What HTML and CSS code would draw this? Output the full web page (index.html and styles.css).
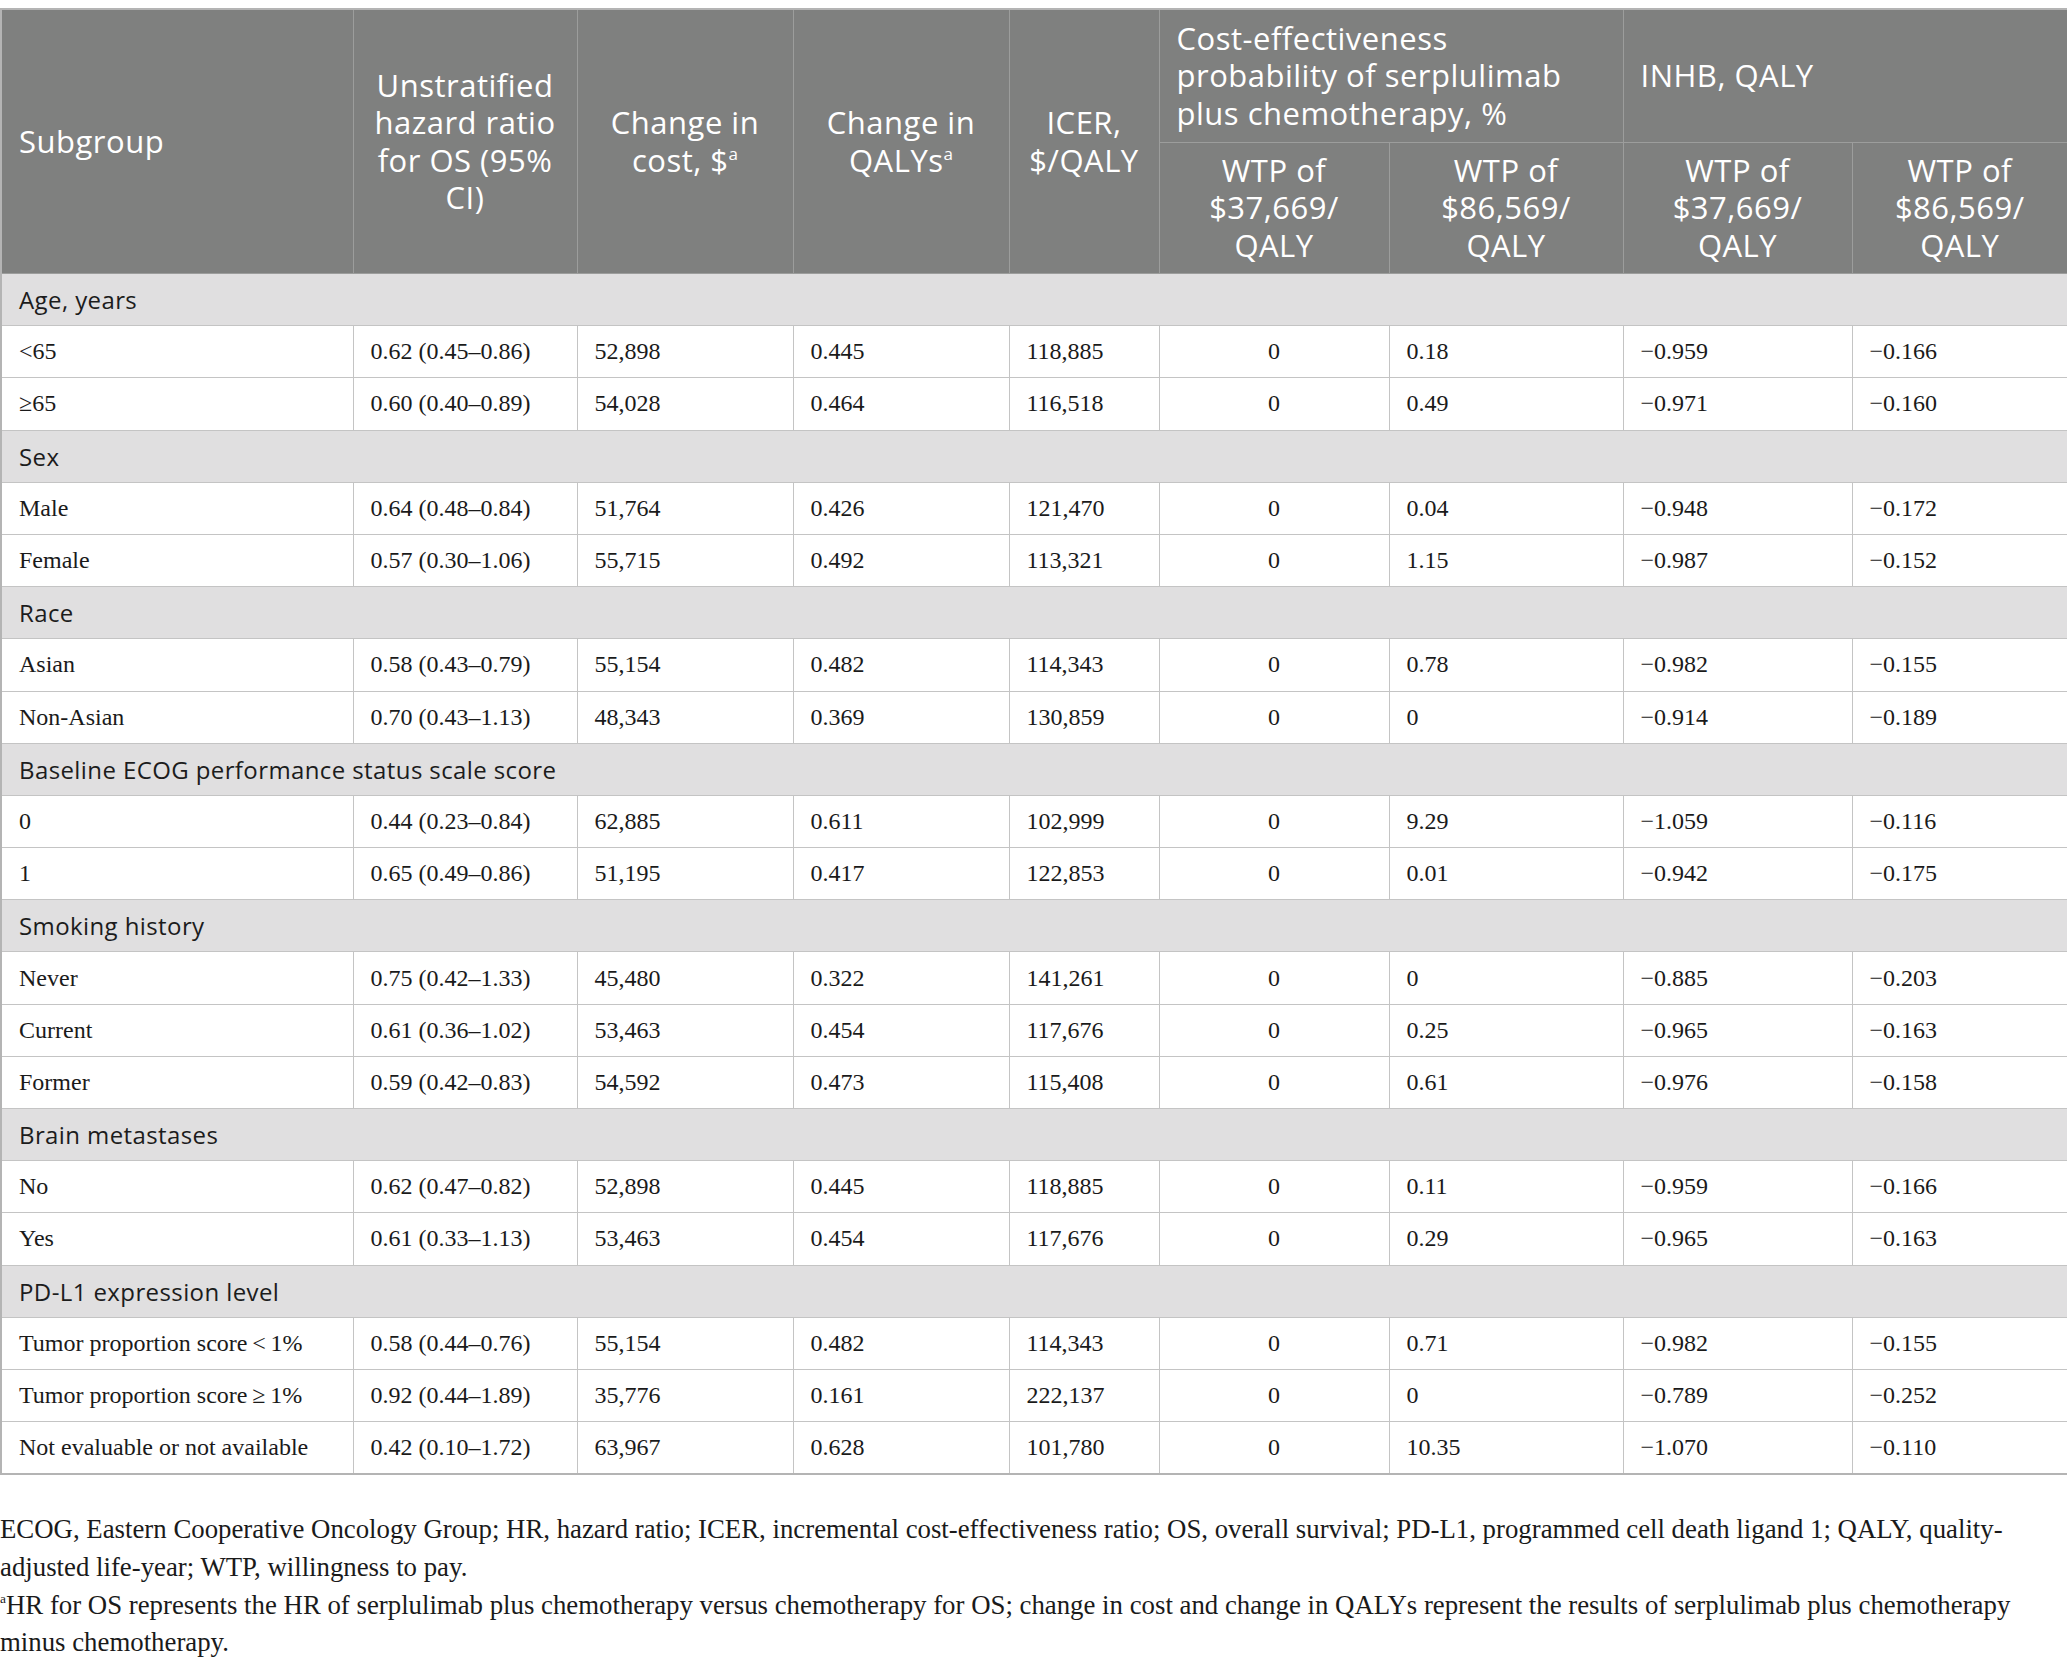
FILE: index.html
```html
<!DOCTYPE html>
<html lang="en">
<head>
<meta charset="utf-8">
<title>Subgroup analysis</title>
<link rel="stylesheet" href="styles.css">
</head>
<body>
<div class="page">
<table class="data">
  <colgroup>
    <col class="c1"><col class="c2"><col class="c3"><col class="c4"><col class="c5"><col class="c6"><col class="c7"><col class="c8"><col class="c9">
  </colgroup>
  <thead>
    <tr class="h1">
      <th rowspan="2" class="left">Subgroup</th>
      <th rowspan="2">Unstratified hazard ratio for OS (95% CI)</th>
      <th rowspan="2">Change in cost, $<sup>a</sup></th>
      <th rowspan="2">Change in QALYs<sup>a</sup></th>
      <th rowspan="2" class="narrow">ICER, $/QALY</th>
      <th colspan="2" class="left">Cost-effectiveness probability of serplulimab plus chemotherapy, %</th>
      <th colspan="2" class="left">INHB, QALY</th>
    </tr>
    <tr class="h2">
      <th>WTP of $37,669/<wbr>QALY</th>
      <th>WTP of $86,569/<wbr>QALY</th>
      <th>WTP of $37,669/<wbr>QALY</th>
      <th>WTP of $86,569/<wbr>QALY</th>
    </tr>
  </thead>
  <tbody>
    <tr class="cat"><td colspan="9">Age, years</td></tr>
    <tr><td>&lt;65</td><td>0.62 (0.45–0.86)</td><td>52,898</td><td>0.445</td><td>118,885</td><td class="ctr">0</td><td>0.18</td><td>−0.959</td><td>−0.166</td></tr>
    <tr><td>≥65</td><td>0.60 (0.40–0.89)</td><td>54,028</td><td>0.464</td><td>116,518</td><td class="ctr">0</td><td>0.49</td><td>−0.971</td><td>−0.160</td></tr>
    <tr class="cat"><td colspan="9">Sex</td></tr>
    <tr><td>Male</td><td>0.64 (0.48–0.84)</td><td>51,764</td><td>0.426</td><td>121,470</td><td class="ctr">0</td><td>0.04</td><td>−0.948</td><td>−0.172</td></tr>
    <tr><td>Female</td><td>0.57 (0.30–1.06)</td><td>55,715</td><td>0.492</td><td>113,321</td><td class="ctr">0</td><td>1.15</td><td>−0.987</td><td>−0.152</td></tr>
    <tr class="cat"><td colspan="9">Race</td></tr>
    <tr><td>Asian</td><td>0.58 (0.43–0.79)</td><td>55,154</td><td>0.482</td><td>114,343</td><td class="ctr">0</td><td>0.78</td><td>−0.982</td><td>−0.155</td></tr>
    <tr><td>Non-Asian</td><td>0.70 (0.43–1.13)</td><td>48,343</td><td>0.369</td><td>130,859</td><td class="ctr">0</td><td>0</td><td>−0.914</td><td>−0.189</td></tr>
    <tr class="cat"><td colspan="9">Baseline ECOG performance status scale score</td></tr>
    <tr><td>0</td><td>0.44 (0.23–0.84)</td><td>62,885</td><td>0.611</td><td>102,999</td><td class="ctr">0</td><td>9.29</td><td>−1.059</td><td>−0.116</td></tr>
    <tr><td>1</td><td>0.65 (0.49–0.86)</td><td>51,195</td><td>0.417</td><td>122,853</td><td class="ctr">0</td><td>0.01</td><td>−0.942</td><td>−0.175</td></tr>
    <tr class="cat"><td colspan="9">Smoking history</td></tr>
    <tr><td>Never</td><td>0.75 (0.42–1.33)</td><td>45,480</td><td>0.322</td><td>141,261</td><td class="ctr">0</td><td>0</td><td>−0.885</td><td>−0.203</td></tr>
    <tr><td>Current</td><td>0.61 (0.36–1.02)</td><td>53,463</td><td>0.454</td><td>117,676</td><td class="ctr">0</td><td>0.25</td><td>−0.965</td><td>−0.163</td></tr>
    <tr><td>Former</td><td>0.59 (0.42–0.83)</td><td>54,592</td><td>0.473</td><td>115,408</td><td class="ctr">0</td><td>0.61</td><td>−0.976</td><td>−0.158</td></tr>
    <tr class="cat"><td colspan="9">Brain metastases</td></tr>
    <tr><td>No</td><td>0.62 (0.47–0.82)</td><td>52,898</td><td>0.445</td><td>118,885</td><td class="ctr">0</td><td>0.11</td><td>−0.959</td><td>−0.166</td></tr>
    <tr><td>Yes</td><td>0.61 (0.33–1.13)</td><td>53,463</td><td>0.454</td><td>117,676</td><td class="ctr">0</td><td>0.29</td><td>−0.965</td><td>−0.163</td></tr>
    <tr class="cat"><td colspan="9">PD-L1 expression level</td></tr>
    <tr><td>Tumor proportion score&thinsp;&lt;&thinsp;1%</td><td>0.58 (0.44–0.76)</td><td>55,154</td><td>0.482</td><td>114,343</td><td class="ctr">0</td><td>0.71</td><td>−0.982</td><td>−0.155</td></tr>
    <tr><td>Tumor proportion score&thinsp;≥&thinsp;1%</td><td>0.92 (0.44–1.89)</td><td>35,776</td><td>0.161</td><td>222,137</td><td class="ctr">0</td><td>0</td><td>−0.789</td><td>−0.252</td></tr>
    <tr><td>Not evaluable or not available</td><td>0.42 (0.10–1.72)</td><td>63,967</td><td>0.628</td><td>101,780</td><td class="ctr">0</td><td>10.35</td><td>−1.070</td><td>−0.110</td></tr>
  </tbody>
</table>
<div class="notes">
  <p>ECOG, Eastern Cooperative Oncology Group; HR, hazard ratio; ICER, incremental cost-effectiveness ratio; OS, overall survival; PD-L1, programmed cell death ligand 1; QALY, quality-adjusted life-year; WTP, willingness to pay.</p>
  <p><sup>a</sup>HR for OS represents the HR of serplulimab plus chemotherapy versus chemotherapy for OS; change in cost and change in QALYs represent the results of serplulimab plus chemotherapy minus chemotherapy.</p>
</div>
</div>
</body>
</html>
```
FILE: styles.css
```css
html, body {
  margin: 0;
  padding: 0;
  background: #ffffff;
}

.page {
  padding-top: 8px;
  width: 2067px;
}

.data {
  width: 2067px;
  table-layout: fixed;
  border-collapse: collapse;
  border: 2px solid #b4b4b4;
  font-family: "Liberation Serif", "Times New Roman", serif;
  font-size: 24px;
  color: #1a1a1a;
}

.c1 { width: 352px; }
.c2 { width: 224px; }
.c3 { width: 216px; }
.c4 { width: 216px; }
.c5 { width: 150px; }
.c6 { width: 230px; }
.c7 { width: 234px; }
.c8 { width: 229px; }
.c9 { width: 216px; }

.data th {
  background: #7f807f;
  color: #ffffff;
  font-family: "Open Sans", "Noto Sans", sans-serif;
  font-weight: 400;
  font-size: 31px;
  letter-spacing: 0.5px;
  line-height: 37.5px;
  text-align: center;
  vertical-align: middle;
  padding: 0 14px;
  border: 1px solid #9c9d9c;
}

.data th.narrow {
  padding: 0 6px;
}

.data th.left {
  text-align: left;
  padding-left: 17px;
}

.data .h1 th { height: 132px; }
.data .h2 th { height: 130px; }

.data th sup {
  font-size: 0.55em;
  vertical-align: 0.7em;
  line-height: 0;
  letter-spacing: 0;
}

.data td {
  height: 51.2px;
  padding: 0 17px;
  border: 1px solid #c4c4c4;
  vertical-align: middle;
  text-align: left;
  white-space: nowrap;
  background: #ffffff;
}

.data td.ctr {
  text-align: center;
}

.data tr.cat td {
  background: #e0dfe0;
  font-family: "Open Sans", "Noto Sans", sans-serif;
  font-size: 24px;
  letter-spacing: 0.4px;
  color: #1c1c1c;
}

.notes {
  margin-top: 36px;
  font-family: "Liberation Serif", "Times New Roman", serif;
  font-size: 26.8px;
  line-height: 37.7px;
  color: #1a1a1a;
}

.notes p {
  margin: 0;
}

.notes sup {
  font-size: 0.5em;
  vertical-align: 0.8em;
  line-height: 0;
}
```
